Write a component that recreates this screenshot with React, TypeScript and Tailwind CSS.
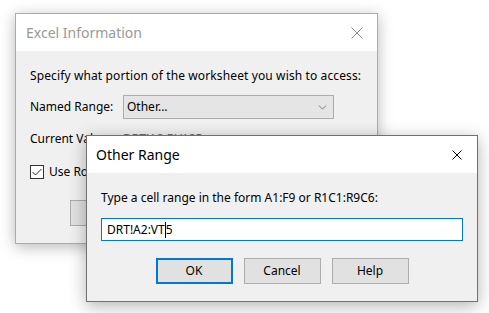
import { ChevronDown } from 'lucide-react';

function CloseIcon({ size, color }: { size: number; color: string }) {
  return (
    <svg width={size} height={size} viewBox={`0 0 ${size} ${size}`}>
      <path d={`M0.5 0.5L${size - 0.5} ${size - 0.5}M${size - 0.5} 0.5L0.5 ${size - 0.5}`} stroke={color} strokeWidth="1" />
    </svg>
  );
}

function App() {
  return (
    <div className="relative w-[489px] h-[313px] overflow-hidden bg-white font-['Noto_Sans',sans-serif] text-[12px] leading-[16px] text-black">
      {/* back window */}
      <div className="absolute left-[15px] top-[13px] w-[363px] h-[231px] flex flex-col border border-[#ababab] bg-[#f0f0f0] shadow-[0_3px_14px_rgba(0,0,0,0.28)]">
        <div className="h-[37px] flex items-center justify-between bg-white pl-[10px] pr-[14px]">
          <span className="text-[14px] text-[#999999]">Excel Information</span>
          <CloseIcon size={12} color="#8f8f8f" />
        </div>
        <div className="flex flex-col pl-[14px] pr-[14px] pt-[17px]">
          <div className="tracking-[0.12px]">Specify what portion of the worksheet you wish to access:</div>
          <div className="mt-[11px] flex items-center">
            <span className="w-[93px]">Named Range:</span>
            <div className="w-[211px] h-[24px] flex items-center justify-between border border-[#adadad] bg-[#e5e5e5] pl-[3px] pr-[4px]">
              <span>Other...</span>
              <ChevronDown size={13} strokeWidth={1.2} color="#444" />
            </div>
          </div>
          <div className="mt-[12px] flex">
            <span className="w-[93px]">Current Value:</span>
            <span className="text-[#6d6d6d]">DRT!A2:BV125</span>
          </div>
          <div className="mt-[17px] flex items-center gap-[5px]">
            <div className="w-[14px] h-[14px] flex items-center justify-center border border-[#333333] bg-white">
              <svg width="10" height="8" viewBox="0 0 10 8">
                <path d="M0.5 4L3.5 7L9.5 1" fill="none" stroke="#333" strokeWidth="1" />
              </svg>
            </div>
            <span>Use Row Headers</span>
          </div>
          <div className="mt-[20px] ml-[40px] w-[75px] h-[26px] border border-[#adadad] bg-[#e1e1e1]" />
        </div>
      </div>

      {/* front window */}
      <div className="absolute left-[86px] top-[135px] w-[392px] h-[167px] flex flex-col border border-[#707070] bg-[#f0f0f0] shadow-[0_4px_16px_rgba(0,0,0,0.3)]">
        <div className="h-[37px] flex items-center justify-between bg-white pl-[9px] pr-[15px]">
          <span className="text-[14px]">Other Range</span>
          <CloseIcon size={10} color="#000" />
        </div>
        <div className="flex flex-col px-[14px] pt-[17px]">
          <div>Type a cell range in the form A1:F9 or R1C1:R9C6:</div>
          <div className="mt-[12px] h-[23px] flex items-center border border-[#0078d7] bg-white pl-[5px]">
            <span>DRT!A2:VT</span>
            <span className="w-px h-[16px] bg-black" />
            <span>5</span>
          </div>
          <div className="mt-[17px] flex justify-center gap-[11px]">
            <button className="w-[77px] h-[26px] border-2 border-[#0078d7] bg-[#e1e1e1]">OK</button>
            <button className="w-[77px] h-[26px] border border-[#adadad] bg-[#e1e1e1]">Cancel</button>
            <button className="w-[77px] h-[26px] border border-[#adadad] bg-[#e1e1e1]">Help</button>
          </div>
        </div>
      </div>
    </div>
  );
}

export default App;
